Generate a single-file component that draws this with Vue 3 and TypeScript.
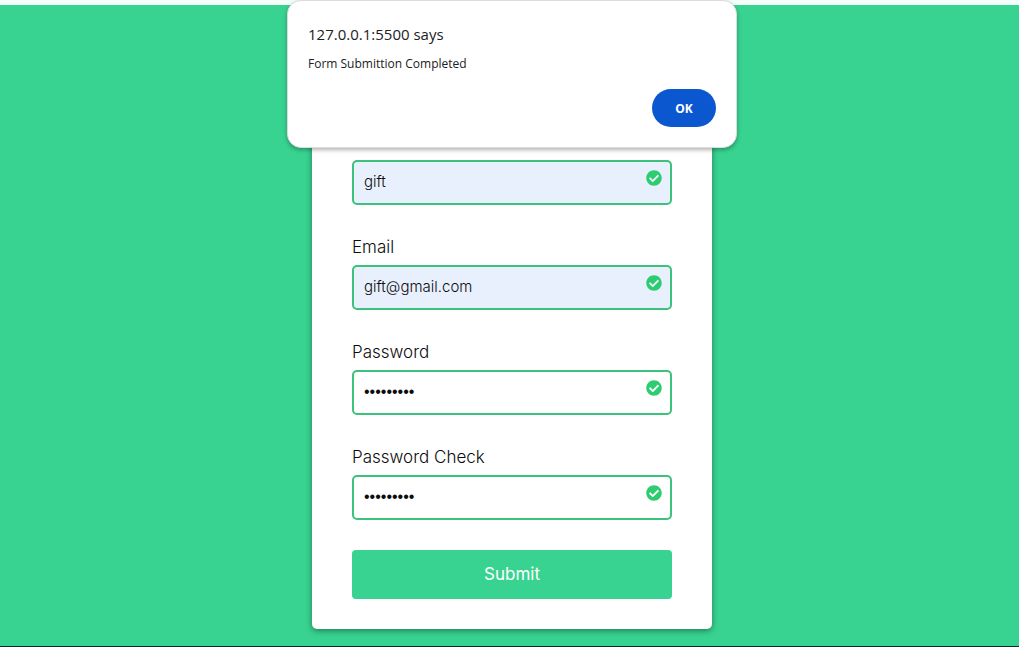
<script setup lang="ts">
import { ref } from 'vue'

interface Field {
  id: string
  label: string
  type: string
  value: string
  labelled: boolean
  autofilled: boolean
}

const fields = ref<Field[]>([
  { id: 'username', label: 'Username', type: 'text', value: 'gift', labelled: false, autofilled: true },
  { id: 'email', label: 'Email', type: 'email', value: 'gift@gmail.com', labelled: true, autofilled: true },
  { id: 'password', label: 'Password', type: 'password', value: 'giftgift1', labelled: true, autofilled: false },
  { id: 'password2', label: 'Password Check', type: 'password', value: 'giftgift1', labelled: true, autofilled: false },
])
const alertOpen = ref(true)
</script>

<template>
  <main class="page">
    <form class="card" @submit.prevent="alertOpen = true">
      <div v-for="field in fields" :key="field.id" class="field">
        <label v-if="field.labelled" class="label" :for="field.id">{{ field.label }}</label>
        <div class="control">
          <input
            :id="field.id"
            v-model="field.value"
            class="input"
            :class="{ autofilled: field.autofilled, secret: field.type === 'password' }"
            :type="field.type"
            :aria-label="field.labelled ? undefined : field.label"
            autocomplete="off"
          />
          <svg class="check" viewBox="0 0 512 512" aria-hidden="true">
            <path
              fill="currentColor"
              d="M504 256c0 136.967-111.033 248-248 248S8 392.967 8 256 119.033 8 256 8s248 111.033 248 248zM227.314 387.314l184-184c6.248-6.248 6.248-16.379 0-22.627l-22.627-22.627c-6.248-6.249-16.379-6.249-22.628 0L216 308.118l-70.059-70.059c-6.248-6.248-16.379-6.248-22.628 0l-22.627 22.627c-6.248 6.248-6.248 16.379 0 22.627l104 104c6.249 6.249 16.379 6.249 22.628.001z"
            />
          </svg>
        </div>
      </div>
      <button class="submit" type="submit">Submit</button>
    </form>

    <section v-if="alertOpen" class="alert" role="alertdialog" aria-labelledby="alert-title" aria-describedby="alert-text">
      <h1 id="alert-title" class="alert-title">127.0.0.1:5500 says</h1>
      <p id="alert-text" class="alert-text">Form Submittion Completed</p>
      <button class="ok" type="button" @click="alertOpen = false">OK</button>
    </section>
  </main>
</template>

<style>
body {
  margin: 0;
}
</style>

<style scoped>
.page {
  box-sizing: border-box;
  position: relative;
  display: flex;
  flex-direction: column;
  align-items: center;
  justify-content: flex-end;
  min-height: 100vh;
  padding: 0 15px 17px 20px;
  border-top: 5px solid #f5fffa;
  border-bottom: 1px solid #14281f;
  background: #38d391;
  font-family: Inter, "Open Sans", sans-serif;
  color: #0c0c0c;
}

.card {
  box-sizing: border-box;
  display: flex;
  flex-direction: column;
  gap: 30px;
  width: 100%;
  max-width: 400px;
  padding: 30px 40px;
  border-radius: 5px;
  background: #fff;
  box-shadow: 0 2px 6px rgba(0, 0, 0, 0.4);
}

.field {
  display: flex;
  flex-direction: column;
  gap: 5px;
}

.label {
  font-size: 17px;
  font-weight: 300;
  line-height: 25px;
}

.control {
  position: relative;
}

.input {
  box-sizing: border-box;
  display: block;
  width: 100%;
  height: 45px;
  padding: 0 10px 2px;
  border: 2px solid #3cc27b;
  border-radius: 5px;
  outline: none;
  background: #fff;
  color: #0c0c0c;
  font-family: inherit;
  font-size: 15px;
  font-weight: 300;
}

.autofilled {
  background: #e8f0fe;
}

.secret {
  font-family: "Liberation Sans", sans-serif;
  font-size: 16px;
}

.check {
  position: absolute;
  top: 10px;
  right: 10px;
  width: 16px;
  height: 16px;
  color: #2ecc71;
}

.submit {
  height: 49px;
  padding: 0 0 2px;
  border: 0;
  border-radius: 4px;
  background: #38d391;
  color: #fff;
  font-family: inherit;
  font-size: 17px;
  cursor: pointer;
}

.alert {
  box-sizing: border-box;
  position: absolute;
  top: -5px;
  left: 20px;
  right: 15px;
  display: flex;
  flex-direction: column;
  max-width: 450px;
  margin: 0 auto;
  padding: 22px 20px 20px;
  border: 1px solid #dcdcdc;
  border-radius: 14px;
  background: #fff;
  box-shadow: 0 2px 4px rgba(0, 0, 0, 0.3);
  font-family: "Open Sans", "Noto Sans", sans-serif;
}

.alert-title {
  margin: 0;
  color: #202124;
  font-size: 15px;
  font-weight: 500;
  line-height: 22px;
}

.alert-text {
  margin: 10px 0 16px;
  color: #202124;
  font-size: 12px;
  line-height: 18px;
}

.ok {
  align-self: flex-end;
  width: 64px;
  height: 38px;
  border: 0;
  border-radius: 19px;
  background: #0b57d0;
  color: #fff;
  font-family: inherit;
  font-size: 12px;
  font-weight: 700;
  cursor: pointer;
}
</style>
